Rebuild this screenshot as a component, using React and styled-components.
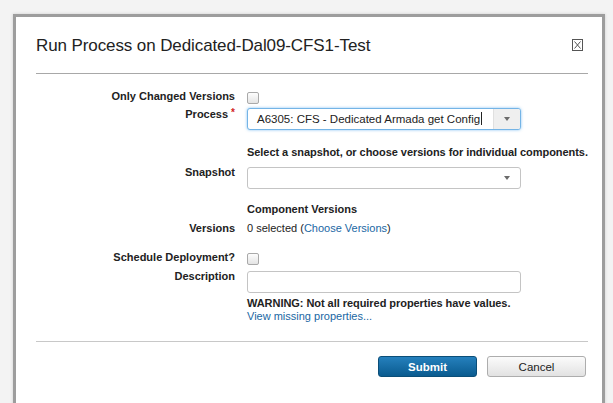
import React from 'react'
import styled, { createGlobalStyle, css } from 'styled-components'

const Global = createGlobalStyle`
    html, body {
        margin: 0;
        padding: 0;
        background: #f3f3f3;
        font-family: "Liberation Sans", Arial, sans-serif;
        color: #222;
    }
`;

const Page = styled.div`
    height: 403px;
    overflow: hidden;
    padding: 14px 8px 0 13px;
    box-sizing: border-box;
`;

const Dialog = styled.div`
    background: #fff;
    border: 3px solid #9d9d9d;
    border-bottom: none;
    height: 420px;
    box-sizing: border-box;
    padding: 0 14px 0 20px;
    box-shadow: 0 0 3px rgba(0, 0, 0, 0.15);
`;

const Header = styled.div`
    display: flex;
    justify-content: space-between;
    align-items: center;
    height: 56px;
    border-bottom: 1px solid #a8a8a8;
`;

const Title = styled.h2`
    margin: 0;
    font-size: 17px;
    font-weight: normal;
    letter-spacing: -0.1px;
    color: #222;
    padding-top: 2px;
`;

const Close = styled.button`
    border: none;
    background: none;
    padding: 0;
    margin-right: 5px;
    width: 11px;
    height: 12px;
    display: flex;
    cursor: pointer;
`;

const Form = styled.div`
    padding-top: 16px;
`;

const Row = styled.div`
    display: grid;
    grid-template-columns: 199px 274px;
    column-gap: 12px;
    align-items: start;
    margin-top: ${p => p.$gap || 0}px;
`;

const Label = styled.div`
    text-align: right;
    font-size: 11px;
    font-weight: bold;
    line-height: 13px;
    color: #222;
    margin-top: ${p => p.$offset || 0}px;
    white-space: nowrap;
`;

const Req = styled.span`
    color: #d21f1f;
    margin-left: 3px;
    font-size: 10px;
    position: relative;
    top: -2px;
`;

const Checkbox = styled.span`
    display: block;
    width: 12px;
    height: 12px;
    margin-top: 2px;
    box-sizing: border-box;
    border: 1px solid #a9a9a9;
    border-radius: 2px;
    background: linear-gradient(#fdfdfd, #e4e4e4);
`;

const Field = styled.div`
    display: flex;
    align-items: stretch;
    width: 274px;
    height: 22px;
    box-sizing: border-box;
    border: 1px solid #c4c4c4;
    border-radius: 3px;
    background: #fff;
    overflow: hidden;
    margin-top: ${p => p.$offset || 0}px;
    ${p => p.$focus && css`
        border-color: #74b4e6;
        box-shadow: 0 0 3px rgba(82, 168, 236, 0.7);
    `}
`;

const FieldText = styled.span`
    flex: 1;
    font-size: 11.5px;
    line-height: 20px;
    padding-left: 9px;
    color: #222;
`;

const Caret = styled.span`
    display: inline-block;
    width: 1px;
    height: 13px;
    background: #222;
    vertical-align: -2px;
    margin-left: 1px;
`;

const Arrow = styled.span`
    width: 26px;
    display: flex;
    align-items: center;
    justify-content: center;
    background: ${p => (p.$shaded ? '#efefef' : 'transparent')};
    border-left: ${p => (p.$shaded ? '1px solid #e0e0e0' : 'none')};
    &::after {
        content: '';
        border-left: 3.5px solid transparent;
        border-right: 3.5px solid transparent;
        border-top: 4px solid #6b6b6b;
    }
`;

const Note = styled.div`
    font-size: 11px;
    line-height: 13px;
    font-weight: ${p => (p.$bold ? 'bold' : 'normal')};
    letter-spacing: ${p => p.$tight ? '-0.05px' : 'normal'};
    color: #222;
    white-space: nowrap;
    margin-top: ${p => p.$gap || 0}px;
`;

const Link = styled.a`
    color: #1a67a3;
    text-decoration: none;
    cursor: pointer;
    font-weight: normal;
`;

const Divider = styled.div`
    border-top: 1px solid #c8c8c8;
    margin-top: ${p => p.$gap || 0}px;
`;

const Footer = styled.div`
    display: flex;
    justify-content: flex-end;
    gap: 10px;
    padding: 14px 2px 0 0;
`;

const Button = styled.button`
    width: 99px;
    height: 21px;
    box-sizing: border-box;
    border-radius: 3px;
    font-family: "Liberation Sans", Arial, sans-serif;
    font-size: 11.5px;
    cursor: pointer;
    padding: 0;
    ${p => p.$primary
        ? css`
            color: #fff;
            font-weight: bold;
            border: 1px solid #0b4e78;
            background: linear-gradient(#2580bd, #0a5b8f);
        `
        : css`
            color: #222;
            font-weight: normal;
            border: 1px solid #adadad;
            background: linear-gradient(#fbfbfb, #e2e2e2);
        `}
`;

const CloseIcon = () => (
    <svg width="11" height="12" viewBox="0 0 11 12">
        <rect x="0.5" y="0.5" width="10" height="11" fill="none" stroke="#555" />
        <path d="M2.5 2.5 L8.5 9.5 M8.5 2.5 L2.5 9.5" stroke="#555" strokeWidth="1" />
    </svg>
);

const App = () => {
    return (
        <>
            <Global />
            <Page>
                <Dialog>
                    <Header>
                        <Title>Run Process on Dedicated-Dal09-CFS1-Test</Title>
                        <Close aria-label="close"><CloseIcon /></Close>
                    </Header>

                    <Form>
                        <Row>
                            <Label>Only Changed Versions</Label>
                            <Checkbox />
                        </Row>

                        <Row $gap={4}>
                            <Label>Process<Req>*</Req></Label>
                            <Field $focus>
                                <FieldText>A6305: CFS - Dedicated Armada get Config<Caret /></FieldText>
                                <Arrow $shaded />
                            </Field>
                        </Row>

                        <Row $gap={16}>
                            <span />
                            <Note $bold $tight>Select a snapshot, or choose versions for individual components.</Note>
                        </Row>

                        <Row $gap={7}>
                            <Label>Snapshot</Label>
                            <Field $offset={1}>
                                <FieldText />
                                <Arrow />
                            </Field>
                        </Row>

                        <Row $gap={14}>
                            <span />
                            <Note $bold>Component Versions</Note>
                        </Row>

                        <Row $gap={6}>
                            <Label>Versions</Label>
                            <Note>0 selected (<Link>Choose Versions</Link>)</Note>
                        </Row>

                        <Row $gap={16}>
                            <Label>Schedule Deployment?</Label>
                            <Checkbox />
                        </Row>

                        <Row $gap={5}>
                            <Label>Description</Label>
                            <Field $offset={1}>
                                <FieldText />
                            </Field>
                        </Row>

                        <Row $gap={4}>
                            <span />
                            <div>
                                <Note $bold $tight>WARNING: Not all required properties have values.</Note>
                                <Note><Link>View missing properties...</Link></Note>
                            </div>
                        </Row>
                    </Form>

                    <Divider $gap={18} />

                    <Footer>
                        <Button $primary>Submit</Button>
                        <Button>Cancel</Button>
                    </Footer>
                </Dialog>
            </Page>
        </>
    )
}

export default App
